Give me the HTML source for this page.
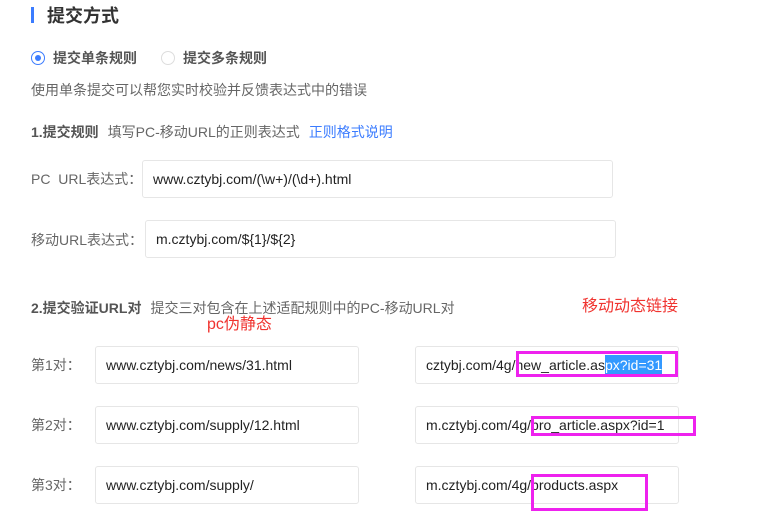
<!DOCTYPE html>
<html><head><meta charset="utf-8"><style>
*{margin:0;padding:0;box-sizing:border-box}
body{width:762px;height:532px;background:#fff;position:relative;overflow:hidden;font-family:"Liberation Sans","Noto Sans CJK SC",sans-serif;color:#666;font-size:14px;line-height:20px}
.a{position:absolute;white-space:nowrap}
.in{position:absolute;border:1px solid #e6e6e6;border-radius:3px;background:#fff;color:#222;font-size:14px;padding-left:10px;display:flex;align-items:center;white-space:nowrap}
.mg{position:absolute;border:3px solid #ee22ee}
.red{color:#f0332f;font-size:16px}
.g{margin-left:9px}
</style></head><body>
<div class="a" style="left:31px;top:7px;width:3px;height:16px;background:#3b7cff"></div>
<div class="a" style="left:47px;top:5px;font-size:18px;font-weight:bold;color:#333;line-height:22px">提交方式</div>
<div class="a" style="left:31px;top:51px;width:14px;height:14px;border:1px solid #3b7cff;border-radius:50%"></div>
<div class="a" style="left:35px;top:55px;width:6px;height:6px;background:#3b7cff;border-radius:50%"></div>
<div class="a" style="left:53px;top:48px;font-weight:bold;color:#555">提交单条规则</div>
<div class="a" style="left:161px;top:51px;width:14px;height:14px;border:1px solid #ddd;border-radius:50%"></div>
<div class="a" style="left:183px;top:48px;font-weight:bold;color:#555">提交多条规则</div>
<div class="a" style="left:31px;top:80px">使用单条提交可以帮您实时校验并反馈表达式中的错误</div>
<div class="a" style="left:31px;top:122px"><b style="color:#555">1.提交规则</b><span class="g">填写PC-移动URL的正则表达式</span><span class="g" style="color:#3b7cff">正则格式说明</span></div>
<div class="a" style="left:31px;top:169px">PC&nbsp; URL表达式：</div>
<div class="in" style="left:142px;top:160px;width:471px;height:38px">www.cztybj.com/(\w+)/(\d+).html</div>
<div class="a" style="left:31px;top:230px">移动URL表达式：</div>
<div class="in" style="left:145px;top:220px;width:471px;height:38px">m.cztybj.com/${1}/${2}</div>
<div class="a" style="left:31px;top:298px"><b style="color:#555">2.提交验证URL对</b><span class="g">提交三对包含在上述适配规则中的PC-移动URL对</span></div>
<div class="a red" style="left:207px;top:315px">pc伪静态</div>
<div class="a red" style="left:582px;top:297px">移动动态链接</div>
<div class="a" style="left:31px;top:355px">第1对：</div>
<div class="in" style="left:95px;top:346px;width:264px;height:38px">www.cztybj.com/news/31.html</div>
<div class="in" style="left:415px;top:346px;width:264px;height:38px">cztybj.com/4g/new_article.as<span style="background:#3399ff;color:#fff">px?id=31</span></div>
<div class="a" style="left:31px;top:415px">第2对：</div>
<div class="in" style="left:95px;top:406px;width:264px;height:38px">www.cztybj.com/supply/12.html</div>
<div class="in" style="left:415px;top:406px;width:264px;height:38px">m.cztybj.com/4g/pro_article.aspx?id=1</div>
<div class="a" style="left:31px;top:475px">第3对：</div>
<div class="in" style="left:95px;top:466px;width:264px;height:38px">www.cztybj.com/supply/</div>
<div class="in" style="left:415px;top:466px;width:264px;height:38px">m.cztybj.com/4g/products.aspx</div>
<div class="mg" style="left:516px;top:351px;width:162px;height:26px"></div>
<div class="mg" style="left:531px;top:416px;width:165px;height:20px"></div>
<div class="mg" style="left:531px;top:474px;width:117px;height:37px"></div>
</body></html>
